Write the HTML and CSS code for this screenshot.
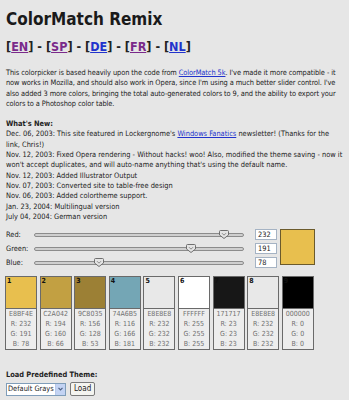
FILE: index.html
```html
<!DOCTYPE html>
<html lang="en">
<head>
  <meta charset="UTF-8">
  <title>ColorMatch Remix</title>
  <link rel="stylesheet" href="styles.css">
</head>
<body>
  <h1>ColorMatch Remix</h1>
  <div class="langs">
    [<a href="#" class="visited">EN</a>] - [<a href="#" class="visited">SP</a>] - [<a href="#">DE</a>] - [<a href="#" class="visited">FR</a>] - [<a href="#">NL</a>]
  </div>

  <p class="intro">This colorpicker is based heavily upon the code from <a href="#">ColorMatch 5k</a>. I've made it more compatible - it now works in Mozilla, and should also work in Opera, since I'm using a much better slider control. I've also added 3 more colors, bringing the total auto-generated colors to 9, and the ability to export your colors to a Photoshop color table.</p>

  <div class="news">
    <b>What's New:</b><br>
    Dec. 06, 2003: This site featured in Lockergnome's <a href="#">Windows Fanatics</a> newsletter! (Thanks for the link, Chris!)<br>
    Nov. 12, 2003: Fixed Opera rendering - Without hacks! woo! Also, modified the theme saving - now it won't accept duplicates, and will auto-name anything that's using the default name.<br>
    Nov. 12, 2003: Added Illustrator Output<br>
    Nov. 07, 2003: Converted site to table-free design<br>
    Nov. 06, 2003: Added colortheme support.<br>
    Jan. 23, 2004: Multilingual version<br>
    July 04, 2004: German version
  </div>

  <div class="mixer">
    <div class="sliders">
      <div class="row">
        <span class="label">Red:</span>
        <div class="track"><span class="thumb" style="left: 91%;"><svg width="10" height="9" viewBox="0 0 10 9"><path d="M1.5 0.5h7a1 1 0 0 1 1 1v3.5l-4.5 3.5l-4.5-3.5v-3.5a1 1 0 0 1 1-1z" fill="#e4e4e4" stroke="#6f6f6f"/><path d="M3 3.2l2 2l2-2" fill="none" stroke="#8a8a8a"/></svg></span></div>
        <input type="text" value="232">
      </div>
      <div class="row">
        <span class="label">Green:</span>
        <div class="track"><span class="thumb" style="left: 74.9%;"><svg width="10" height="9" viewBox="0 0 10 9"><path d="M1.5 0.5h7a1 1 0 0 1 1 1v3.5l-4.5 3.5l-4.5-3.5v-3.5a1 1 0 0 1 1-1z" fill="#e4e4e4" stroke="#6f6f6f"/><path d="M3 3.2l2 2l2-2" fill="none" stroke="#8a8a8a"/></svg></span></div>
        <input type="text" value="191">
      </div>
      <div class="row">
        <span class="label">Blue:</span>
        <div class="track"><span class="thumb" style="left: 30.6%;"><svg width="10" height="9" viewBox="0 0 10 9"><path d="M1.5 0.5h7a1 1 0 0 1 1 1v3.5l-4.5 3.5l-4.5-3.5v-3.5a1 1 0 0 1 1-1z" fill="#e4e4e4" stroke="#6f6f6f"/><path d="M3 3.2l2 2l2-2" fill="none" stroke="#8a8a8a"/></svg></span></div>
        <input type="text" value="78">
      </div>
    </div>
    <div class="preview"></div>
  </div>

  <div class="swatches">
    <div class="swatch">
      <div class="chip" style="background: #E8BF4E;">1</div>
      <div class="info">E8BF4E<br>R: 232<br>G: 191<br>B: 78</div>
    </div>
    <div class="swatch">
      <div class="chip" style="background: #C2A042;">2</div>
      <div class="info">C2A042<br>R: 194<br>G: 160<br>B: 66</div>
    </div>
    <div class="swatch">
      <div class="chip" style="background: #9C8035;">3</div>
      <div class="info">9C8035<br>R: 156<br>G: 128<br>B: 53</div>
    </div>
    <div class="swatch">
      <div class="chip" style="background: #74A6B5;">4</div>
      <div class="info">74A6B5<br>R: 116<br>G: 166<br>B: 181</div>
    </div>
    <div class="swatch">
      <div class="chip" style="background: #E8E8E8;">5</div>
      <div class="info">E8E8E8<br>R: 232<br>G: 232<br>B: 232</div>
    </div>
    <div class="swatch">
      <div class="chip" style="background: #FFFFFF;">6</div>
      <div class="info">FFFFFF<br>R: 255<br>G: 255<br>B: 255</div>
    </div>
    <div class="swatch">
      <div class="chip" style="background: #171717;">7</div>
      <div class="info">171717<br>R: 23<br>G: 23<br>B: 23</div>
    </div>
    <div class="swatch">
      <div class="chip" style="background: #E8E8E8;">8</div>
      <div class="info">E8E8E8<br>R: 232<br>G: 232<br>B: 232</div>
    </div>
    <div class="swatch">
      <div class="chip" style="background: #000000;">9</div>
      <div class="info">000000<br>R: 0<br>G: 0<br>B: 0</div>
    </div>
  </div>

  <div class="themes">
    <b>Load Predefined Theme:</b>
    <div class="theme-row">
      <span class="picker">
        <select>
          <option>Default Grays</option>
        </select>
        <span class="arrow"><svg width="5" height="4" viewBox="0 0 5 4"><path d="M0.5 0.8l2 2l2-2" fill="none" stroke="#4d6185" stroke-width="1.2"/></svg></span>
      </span>
      <button>Load</button>
    </div>
  </div>
</body>
</html>
```

FILE: styles.css
```css
body {
  margin: 0;
  padding: 0 6px;
  background-color: #e6e6e6;
  color: #222;
  font-family: "DejaVu Sans Condensed", "DejaVu Sans", sans-serif;
  font-size: 7.4px;
  line-height: 10.3px;
}
a {
  color: #2233cc;
}
a.visited {
  color: #7a2a8a;
}
h1 {
  font-size: 17px;
  line-height: 20px;
  margin: 9px 0 0;
  color: #1a1a1a;
}
.langs {
  font-size: 12.5px;
  font-weight: bold;
  line-height: 16px;
  margin-top: 10px;
}
.intro {
  margin: 13px 0 10px;
  letter-spacing: -0.09px;
}
.news {
  margin-bottom: 7px;
}
.mixer {
  display: flex;
  align-items: flex-start;
}
.sliders {
  display: flex;
  flex-direction: column;
  gap: 3px;
}
.row {
  display: flex;
  align-items: center;
  height: 11px;
}
.label {
  width: 28px;
}
.track {
  position: relative;
  width: 208px;
  height: 2px;
  border: 1px solid #8c8c8c;
  background-color: #cfcfcf;
  border-radius: 2px;
  margin-right: 11px;
}
.thumb {
  position: absolute;
  top: -4px;
  margin-left: -5px;
  line-height: 0;
}
.row input {
  width: 16px;
  height: 9px;
  padding: 0 2px;
  border: 1px solid #a5b3c4;
  background-color: #fff;
  font: inherit;
  color: #222;
}
.preview {
  width: 33px;
  height: 34px;
  margin-left: 3px;
  border: 1px solid #6b5a2c;
  background-color: #E8BF4E;
}
.swatches {
  display: flex;
  gap: 2.6px;
  margin-top: 8px;
  margin-left: -1px;
}
.swatch {
  width: 30px;
  border: 1px solid #6a6a6a;
}
.chip {
  height: 31px;
  border-bottom: 1px solid #6a6a6a;
  font-size: 7px;
  font-weight: bold;
  line-height: 9px;
  padding-left: 1px;
  color: #111;
}
.info {
  height: 40px;
  background-color: #ededed;
  color: #707070;
  text-align: center;
  font-size: 7px;
  line-height: 10px;
}
.themes {
  margin-top: 20px;
}
.theme-row {
  display: flex;
  align-items: center;
  gap: 4px;
  margin-top: 2px;
}
.picker {
  display: flex;
  height: 11px;
  border: 1px solid #7f9db9;
  background-color: #fff;
}
.picker select {
  appearance: none;
  border: none;
  background: none;
  padding: 0 1px;
  font: inherit;
  color: #222;
  width: 48px;
  height: 11px;
}
.arrow {
  display: flex;
  align-items: center;
  justify-content: center;
  width: 9px;
  background-color: #c3d3f3;
  border-left: 1px solid #b7c8ea;
}
button {
  height: 14px;
  padding: 0 3px;
  font: inherit;
  font-size: 8px;
  color: #222;
  background-color: #f4f4f0;
  border: 1px solid #7a7a7a;
  border-radius: 2px;
}
```
